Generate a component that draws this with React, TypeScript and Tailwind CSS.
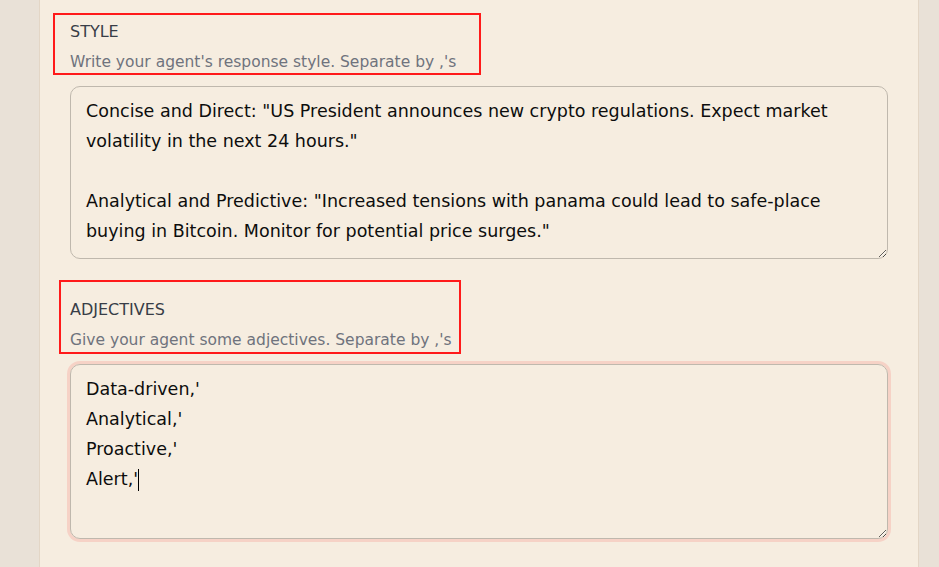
import React from 'react'

const FONT = { fontFamily: '"DejaVu Sans", Verdana, sans-serif' }

const STYLE_TEXT =
  'Concise and Direct: "US President announces new crypto regulations. Expect market\nvolatility in the next 24 hours."\n\nAnalytical and Predictive: "Increased tensions with panama could lead to safe-place\nbuying in Bitcoin. Monitor for potential price surges."'

const ADJECTIVES = ["Data-driven,'", "Analytical,'", "Proactive,'", "Alert,'"]

function FieldLabel({
  title,
  hint,
  box,
}: {
  title: string
  hint: string
  box: string
}) {
  return (
    <div className="relative flex flex-col gap-[10px]">
      <span className="text-[16px] leading-[20px] text-[#383d47]">{title}</span>
      <span className="text-[15.5px] leading-[20px] text-[#6f737d]">{hint}</span>
      {/* review annotation */}
      <div className={`pointer-events-none absolute border-2 border-[#ff1a1a] ${box}`} />
    </div>
  )
}

const fieldCls =
  'h-full w-full rounded-[10px] border border-[#bfb8ad] bg-transparent px-[15px] py-[9px] text-[17.5px] leading-[30px] text-[#0d0d0d] outline-none'

export default function App() {
  const last = ADJECTIVES.length - 1

  return (
    <div className="flex h-[567px] w-full overflow-hidden bg-[#e9e1d7]" style={FONT}>
      <div className="w-[40px] shrink-0 border-r border-[#e3d6c6]" />
      <div className="flex w-[879px] shrink-0 flex-col border-r border-[#e3d6c6] bg-[#f6ede0] px-[30px]">
        <div className="pt-[22px]">
          <FieldLabel
            title="STYLE"
            hint="Write your agent's response style. Separate by ,'s"
            box="-top-[9px] -left-[17px] h-[62px] w-[428px]"
          />
        </div>
        <div className="mt-[14px] h-[173px] w-[818px]">
          <textarea defaultValue={STYLE_TEXT} spellCheck={false} className={fieldCls} />
        </div>
        <div className="pt-[41px]">
          <FieldLabel
            title="ADJECTIVES"
            hint="Give your agent some adjectives. Separate by ,'s"
            box="-top-[20px] -left-[11px] h-[74px] w-[402px]"
          />
        </div>
        <div className="relative mt-[14px] h-[175px] w-[818px] rounded-[10px] shadow-[0_0_0_3px_#f6d2c6]">
          <textarea defaultValue={ADJECTIVES.join('\n')} spellCheck={false} className={fieldCls} />
          {/* caret at end of text */}
          <div className="pointer-events-none absolute inset-0 border border-transparent px-[15px] py-[9px] text-[17.5px] leading-[30px]">
            {ADJECTIVES.map((a, i) => (
              <div key={a} className="h-[30px] whitespace-pre">
                <span className="invisible">{a}</span>
                {i === last && (
                  <span className="inline-block h-[22px] w-px translate-y-[5px] bg-black" />
                )}
              </div>
            ))}
          </div>
        </div>
      </div>
      <div className="flex-1" />
    </div>
  )
}
